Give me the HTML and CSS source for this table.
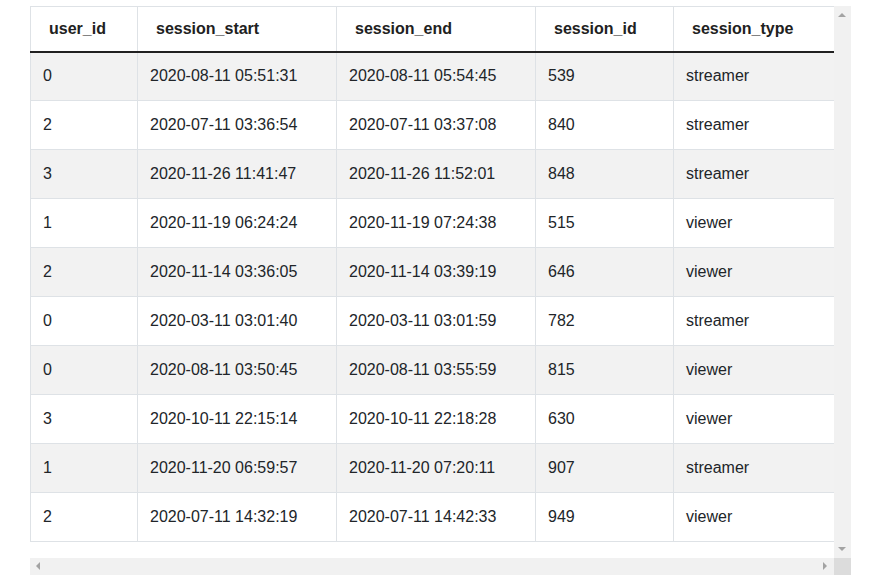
FILE: index.html
```html
<!DOCTYPE html>
<html>
<head>
<meta charset="utf-8">
<link rel="stylesheet" href="styles.css">
</head>
<body>
<div class="frame">
  <div class="viewport">
    <table class="data">
      <colgroup>
        <col class="c1"><col class="c2"><col class="c3"><col class="c4"><col class="c5">
      </colgroup>
      <thead>
        <tr><th>user_id</th><th>session_start</th><th>session_end</th><th>session_id</th><th>session_type</th></tr>
      </thead>
      <tbody>
        <tr><td>0</td><td>2020-08-11 05:51:31</td><td>2020-08-11 05:54:45</td><td>539</td><td>streamer</td></tr>
        <tr><td>2</td><td>2020-07-11 03:36:54</td><td>2020-07-11 03:37:08</td><td>840</td><td>streamer</td></tr>
        <tr><td>3</td><td>2020-11-26 11:41:47</td><td>2020-11-26 11:52:01</td><td>848</td><td>streamer</td></tr>
        <tr><td>1</td><td>2020-11-19 06:24:24</td><td>2020-11-19 07:24:38</td><td>515</td><td>viewer</td></tr>
        <tr><td>2</td><td>2020-11-14 03:36:05</td><td>2020-11-14 03:39:19</td><td>646</td><td>viewer</td></tr>
        <tr><td>0</td><td>2020-03-11 03:01:40</td><td>2020-03-11 03:01:59</td><td>782</td><td>streamer</td></tr>
        <tr><td>0</td><td>2020-08-11 03:50:45</td><td>2020-08-11 03:55:59</td><td>815</td><td>viewer</td></tr>
        <tr><td>3</td><td>2020-10-11 22:15:14</td><td>2020-10-11 22:18:28</td><td>630</td><td>viewer</td></tr>
        <tr><td>1</td><td>2020-11-20 06:59:57</td><td>2020-11-20 07:20:11</td><td>907</td><td>streamer</td></tr>
        <tr><td>2</td><td>2020-07-11 14:32:19</td><td>2020-07-11 14:42:33</td><td>949</td><td>viewer</td></tr>
      </tbody>
    </table>
  </div>
  <div class="vbar">
    <span class="arrow up"></span>
    <span class="arrow down"></span>
  </div>
  <div class="hbar">
    <span class="arrow left"></span>
    <span class="arrow right"></span>
  </div>
  <div class="corner"></div>
</div>
</body>
</html>
```

FILE: styles.css
```css
* { box-sizing: border-box; }
html, body { margin: 0; padding: 0; background: #ffffff; }
body {
  font-family: "Liberation Sans", Arial, sans-serif;
  font-size: 16px;
  color: #212529;
  padding: 6px 0 0 30px;
}
.frame {
  display: grid;
  grid-template-columns: 804px 17px;
  grid-template-rows: 552px 17px;
  width: 821px;
  height: 569px;
}
.viewport {
  overflow: hidden;
  background: #fff;
}
.data {
  border-collapse: collapse;
  table-layout: fixed;
  width: 804px;
}
.c1 { width: 107px; }
.c2 { width: 199px; }
.c3 { width: 199px; }
.c4 { width: 138px; }
.c5 { width: 161px; }
.data th, .data td {
  border: 1px solid #dee2e6;
  text-align: left;
  white-space: nowrap;
}
.data th {
  font-weight: bold;
  color: #212121;
  height: 45px;
  padding: 0 18px;
  border-bottom: 2px solid #212121;
}
.data td {
  height: 49px;
  padding: 0 13px 0 12px;
}
.data tbody tr:nth-child(odd) td { background: #f2f2f2; }
.vbar {
  background: #f1f1f1;
  position: relative;
}
.hbar {
  background: #f1f1f1;
  position: relative;
}
.corner { background: #dcdcdc; }
.arrow {
  position: absolute;
  width: 0; height: 0;
  border-style: solid;
}
.arrow.up {
  top: 7px; left: 4px;
  border-width: 0 4px 4px 4px;
  border-color: transparent transparent #a3a3a3 transparent;
}
.arrow.down {
  bottom: 7px; left: 4px;
  border-width: 4px 4px 0 4px;
  border-color: #a3a3a3 transparent transparent transparent;
}
.arrow.left {
  left: 6px; top: 4px;
  border-width: 4px 4px 4px 0;
  border-color: transparent #a3a3a3 transparent transparent;
}
.arrow.right {
  right: 7px; top: 4px;
  border-width: 4px 0 4px 4px;
  border-color: transparent transparent transparent #a3a3a3;
}
```
